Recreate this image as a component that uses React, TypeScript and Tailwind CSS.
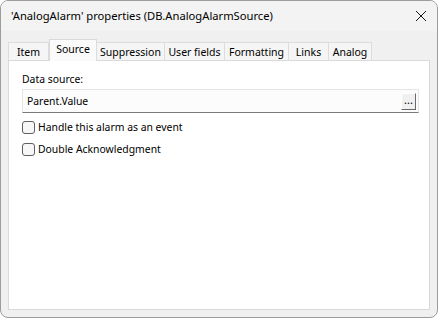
import React from "react";

const tabs = [
  { name: "Item", w: 41 },
  { name: "Source", w: 48, sel: true },
  { name: "Suppression", w: 69 },
  { name: "User fields", w: 61 },
  { name: "Formatting", w: 65 },
  { name: "Links", w: 41 },
  { name: "Analog", w: 44 },
];

function Checkbox({ label }: { label: string }) {
  return (
    <div className="flex items-center h-[13px]">
      <div className="w-[13px] h-[13px] rounded-[3px] border border-[#5f5f5f] bg-[#f7f7f7] shrink-0" />
      <span className="ml-[3px] leading-[13px] whitespace-nowrap">{label}</span>
    </div>
  );
}

export default function App() {
  return (
    <div
      className="w-[438px] h-[318px] bg-[#f0f0f0] text-[10.4px] text-black overflow-hidden rounded-[8px] border border-[#9c9c9c] flex flex-col"
      style={{ fontFamily: '"Noto Sans", sans-serif' }}
    >
      <div className="h-[30px] shrink-0 flex items-center justify-between pl-[10px] pr-[9px] bg-[#f3f3f3]">
        <span className="leading-none text-[11.2px] whitespace-nowrap">'AnalogAlarm' properties (DB.AnalogAlarmSource)</span>
        <svg width="12" height="12" viewBox="0 0 12 12" className="mr-[1px]">
          <path d="M1 1 L11 11 M11 1 L1 11" stroke="#1a1a1a" strokeWidth="1" />
        </svg>
      </div>
      <div className="flex-1 flex flex-col px-[7px] pb-[7px] pt-[7px]">
        <div className="flex items-end h-[22px] relative z-10">
          {tabs.map((t) => (
            <div
              key={t.name}
              style={{ width: t.w }}
              className={
                t.sel
                  ? "h-[22px] -mb-px bg-[#fafafa] border border-b-0 border-[#d9d9d9] flex items-center justify-center pb-[3px] shrink-0"
                  : "h-[18px] bg-[#f5f5f5] border border-b-0 border-[#dcdcdc] -ml-px first:ml-0 flex items-center justify-center pt-[1px] shrink-0"
              }
            >
              <span className="leading-none whitespace-nowrap text-[10.5px]">{t.name}</span>
            </div>
          ))}
        </div>
        <div className="flex-1 bg-white border border-[#d9d9d9] flex flex-col pl-[13px] pr-[10px] pt-[11px]">
          <div className="leading-[14px]">Data source:</div>
          <div className="mt-[3px] h-[24px] border border-[#e5e5e5] border-b-[#7a7a7a] bg-[#fcfcfc] flex items-center justify-between pl-[4px] pr-[2px]">
            <span className="leading-none">Parent.Value</span>
            <div className="w-[15px] h-[17px] bg-[#f0f0f0] border border-t-[#ffffff] border-l-[#ffffff] border-r-[#696969] border-b-[#696969] flex items-center justify-center text-[11px] leading-none pb-[3px]">
              ...
            </div>
          </div>
          <div className="mt-[8px] flex flex-col gap-[9px]">
            <Checkbox label="Handle this alarm as an event" />
            <Checkbox label="Double Acknowledgment" />
          </div>
        </div>
      </div>
    </div>
  );
}
